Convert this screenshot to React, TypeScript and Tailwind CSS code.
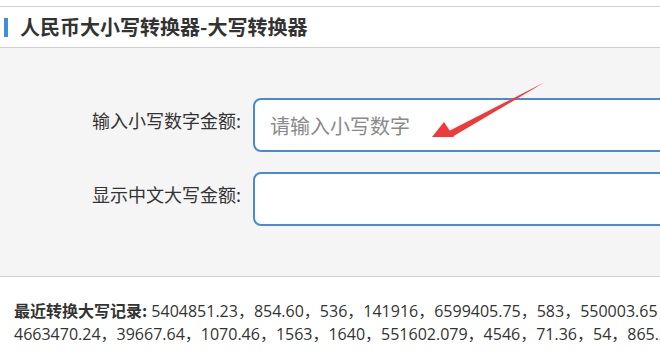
import React from 'react';

const font = { fontFamily: '"Microsoft YaHei", "Noto Sans CJK SC", "Noto Sans", sans-serif' };
const numFont = { fontFamily: '"Open Sans", "Noto Sans CJK SC", sans-serif' };

const recent1 = ['5404851.23', '854.60', '536', '141916', '6599405.75', '583', '550003.65', '7302.18'];
const recent2 = ['4663470.24', '39667.64', '1070.46', '1563', '1640', '551602.079', '4546', '71.36', '54', '865.20'];

const Row = ({ label, placeholder }: { label: string; placeholder?: string }) => (
  <div className="flex items-start">
    <label className="w-[241px] shrink-0 text-right text-[18px] leading-[24px] pt-[10px] text-[#333]">{label}</label>
    <input
      type="text"
      placeholder={placeholder}
      className="ml-[12px] flex-1 h-[54px] bg-white border-2 border-[#4a8ad4] rounded-[8px] px-[15px] text-[20px] text-[#333] placeholder:text-[#8a8a8a] outline-none"
      style={font}
    />
  </div>
);

export default function App() {
  return (
    <div className="w-[660px] h-[360px] overflow-hidden bg-white text-[#333]" style={font}>
      <div className="w-[900px]">
        <div className="h-[6px]" />
        <div className="h-[42px] border-t border-b border-[#cfcfcf] flex items-center">
          <div className="w-[4px] h-[19px] bg-[#3d8ee0] ml-[4px]" />
          <h1 className="ml-[12px] text-[20px] font-bold text-[#333] leading-none">人民币大小写转换器-大写转换器</h1>
        </div>
        <div className="relative bg-[#f5f5f5] border-b border-[#cfcfcf] pt-[50px] pb-[50px] flex flex-col gap-[20px]">
          <Row label="输入小写数字金额:" placeholder="请输入小写数字" />
          <Row label="显示中文大写金额:" />
          <svg className="absolute left-0 top-0 pointer-events-none" width="660" height="200" viewBox="0 0 660 200">
            <path d="M545 34 L449 83 L452 89 Z" fill="#f03a3a" />
            <path d="M432 89 L444 74 L454 89 Z" fill="#f03a3a" />
          </svg>
        </div>
        <div className="pl-[14px] pt-[22px] text-[16px] leading-[23px] text-[#333]" style={numFont}>
          <div className="whitespace-nowrap">
            <span className="font-bold" style={font}>最近转换大写记录:</span> {recent1.join('，')}
          </div>
          <div className="whitespace-nowrap">{recent2.join('，')}</div>
        </div>
      </div>
    </div>
  );
}
